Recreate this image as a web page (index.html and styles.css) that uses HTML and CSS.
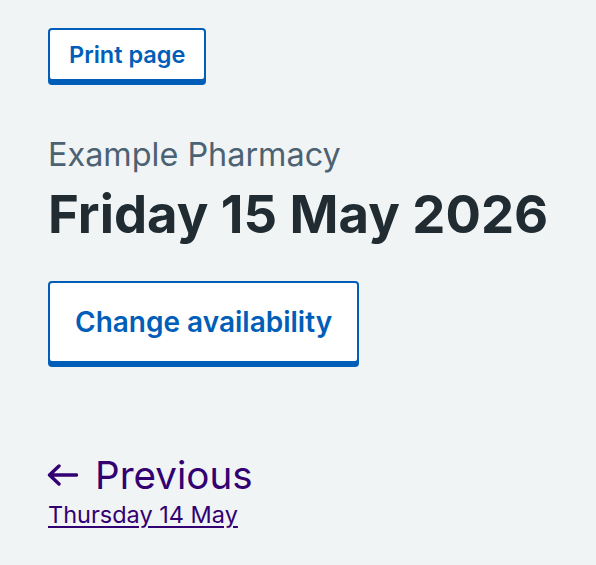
FILE: index.html
```html
<!DOCTYPE html>
<html lang="en">
<head>
<meta charset="utf-8">
<title>Friday 15 May 2026</title>
<link rel="stylesheet" href="styles.css">
</head>
<body>
<main class="page">
  <div class="print-row">
    <button class="btn btn-small" type="button">Print page</button>
  </div>
  <h1 class="heading">
    <span class="caption">Example Pharmacy</span>
    <span class="title">Friday 15 May 2026</span>
  </h1>
  <div class="action-row">
    <button class="btn btn-large" type="button">Change availability</button>
  </div>
  <nav class="pagination">
    <a class="prev" href="#">
      <span class="prev-label">
        <svg class="arrow" viewBox="0 0 31 22" width="31" height="22" aria-hidden="true"><path d="M29.5 11H3M12 2L2.5 11L12 20" fill="none" stroke="currentColor" stroke-width="3.4" stroke-linecap="round" stroke-linejoin="round"/></svg>
        Previous
      </span>
      <span class="prev-date">Thursday 14 May</span>
    </a>
  </nav>
</main>
</body>
</html>
```
FILE: styles.css
```css
html, body {
  margin: 0;
  padding: 0;
  background: #f0f4f5;
}
body {
  font-family: Inter, "Noto Sans", sans-serif;
  color: #212b32;
}
.page {
  padding: 28px 16px 0 48px;
}
.btn {
  font-family: Inter, "Noto Sans", sans-serif;
  font-weight: 600;
  color: #005eb8;
  background: #ffffff;
  border: 2px solid #005eb8;
  border-radius: 4px;
  box-shadow: 0 4px 0 #005eb8;
  cursor: pointer;
  margin: 0;
}
.btn-small {
  font-size: 23.5px;
  padding: 10px 19px;
  line-height: 29px;
}
.btn-large {
  font-size: 28px;
  padding: 21px 25px;
  line-height: 36px;
}
.heading {
  margin: 54px 0 0;
  display: flex;
  flex-direction: column;
}
.caption {
  font-size: 32.4px;
  font-weight: 400;
  color: #4c6272;
  line-height: 40px;
}
.title {
  font-size: 52.6px;
  font-weight: 700;
  line-height: 64px;
  margin-top: 7px;
  white-space: nowrap;
}
.action-row {
  margin-top: 35px;
}
.pagination {
  margin-top: 88px;
}
.prev {
  display: inline-flex;
  flex-direction: column;
  color: #330072;
  text-decoration: none;
}
.prev-label {
  display: flex;
  align-items: center;
  gap: 17px;
  font-size: 38.6px;
  line-height: 48px;
}
.arrow {
  width: 31px;
  height: 22px;
  margin-left: -1px;
}
.prev-date {
  font-size: 23.5px;
  line-height: 32px;
  text-decoration: underline;
  text-decoration-thickness: 1.5px;
  text-underline-offset: 3px;
}
```
